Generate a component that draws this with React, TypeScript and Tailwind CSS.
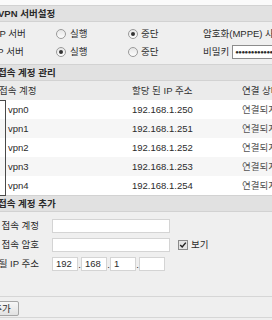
import React from 'react';

const accounts = [
  { name: 'vpn0', ip: '192.168.1.250' },
  { name: 'vpn1', ip: '192.168.1.251' },
  { name: 'vpn2', ip: '192.168.1.252' },
  { name: 'vpn3', ip: '192.168.1.253' },
  { name: 'vpn4', ip: '192.168.1.254' },
];

const Radio = ({ checked }: { checked?: boolean }) => (
  <span className="flex h-[10px] w-[10px] shrink-0 items-center justify-center rounded-full border border-[#9a9a9a] bg-gradient-to-b from-[#e6e6e6] to-[#fdfdfd]">
    {checked && <span className="h-[4px] w-[4px] rounded-full bg-[#333]" />}
  </span>
);

const SectionTitle = ({ children }: { children: React.ReactNode }) => (
  <div className="flex h-[17px] items-center border-y border-[#d2d2d2] bg-[#e1e1e1] pl-[18px] font-bold text-[#2a2a2a]">
    {children}
  </div>
);

const ServerRow = ({ label, run, extra }: { label: string; run: boolean; extra: React.ReactNode }) => (
  <div className="flex h-[18px] items-center whitespace-nowrap">
    <div className="w-[76px] pl-[1px]">{label}</div>
    <label className="flex w-[72px] items-center gap-[4px]">
      <Radio checked={run} />
      <span>실행</span>
    </label>
    <label className="flex w-[75px] items-center gap-[3px]">
      <Radio checked={!run} />
      <span>중단</span>
    </label>
    {extra}
  </div>
);

const Field = ({ className = '', children }: { className?: string; children?: React.ReactNode }) => (
  <div className={`flex h-[14px] shrink-0 items-center border border-[#d4d4d4] bg-white pl-[3px] ${className}`}>{children}</div>
);

// labels are right aligned; long ones run off to the left
const FormLabel = ({ children }: { children: React.ReactNode }) => (
  <div className="flex w-[72px] shrink-0 justify-end whitespace-nowrap pr-[13px]">{children}</div>
);

export default function App() {
  return (
    <div className="h-[320px] w-[272px] overflow-hidden bg-[#efefef] text-[9.5px] leading-none text-[#2b2b2b] [font-family:'Liberation_Sans','Noto_Sans_CJK_KR',sans-serif]">
      <div className="ml-[-20px] w-[330px]">
        <div className="h-[5px] bg-[#fafafa]" />

        <SectionTitle>VPN 서버설정</SectionTitle>
        <div className="pt-[3px] pb-[3px]">
          <ServerRow label="PPTP 서버" run={false} extra={<span>암호화(MPPE) 사용</span>} />
          <ServerRow
            label="L2TP 서버"
            run={true}
            extra={
              <div className="flex items-center gap-[3px]">
                <span>비밀키</span>
                <div className="flex h-[14px] w-[60px] items-center overflow-hidden border border-[#8c8c8c] bg-white pl-[2px] text-[6px] tracking-[-0.5px]">
                  ●●●●●●●●●●●●●●
                </div>
              </div>
            }
          />
        </div>

        <SectionTitle>접속 계정 관리</SectionTitle>
        <div className="flex h-[19px] items-center whitespace-nowrap bg-[#ebebeb] text-[#333]">
          <div className="w-[152px] pl-[19px]">접속 계정</div>
          <div className="w-[110px]">할당 된 IP 주소</div>
          <div>연결 상태</div>
        </div>
        <div className="relative">
          {accounts.map((a, i) => (
            <div key={a.name} className={`flex h-[19px] items-center whitespace-nowrap ${i % 2 ? 'bg-[#f6f6f6]' : 'bg-white'}`}>
              <div className="w-[152px] pl-[28px]">{a.name}</div>
              <div className="w-[110px]">{a.ip}</div>
              <div className="text-[#555]">연결되지 않음</div>
            </div>
          ))}
          <div className="absolute top-[0px] left-[15px] h-[96px] w-[11px] border border-[#4a4a4a]" />
        </div>

        <SectionTitle>접속 계정 추가</SectionTitle>
        <div className="pt-[4px]">
          <div className="flex h-[19px] items-center">
            <FormLabel>접속 계정</FormLabel>
            <Field className="w-[118px]" />
          </div>
          <div className="flex h-[19px] items-center">
            <FormLabel>접속 암호</FormLabel>
            <Field className="w-[118px]" />
            <span className="ml-[8px] flex h-[10px] w-[10px] items-center justify-center border border-[#8a8a8a] bg-[#e4e4e4]">
              <svg viewBox="0 0 10 10" className="h-[8px] w-[8px]">
                <path d="M1.5 5 L4 7.5 L8.5 2" fill="none" stroke="#222" strokeWidth="1.8" />
              </svg>
            </span>
            <span className="ml-[3px]">보기</span>
          </div>
          <div className="flex h-[19px] items-center">
            <FormLabel>할당 될 IP 주소</FormLabel>
            <Field className="w-[26px]">192</Field>
            <span className="w-[3px] self-end pb-[4px] text-center">.</span>
            <Field className="w-[26px]">168</Field>
            <span className="w-[3px] self-end pb-[4px] text-center">.</span>
            <Field className="w-[26px]">1</Field>
            <span className="w-[3px] self-end pb-[4px] text-center">.</span>
            <Field className="w-[26px]" />
          </div>
        </div>

        <div className="mt-[23px] border-t border-[#d6d6d6] pt-[4px] pb-[1px]">
          <button className="ml-[5px] h-[15px] w-[34px] rounded-[2px] border border-[#a6a6a6] bg-gradient-to-b from-[#f7f7f7] to-[#e2e2e2] text-[9.5px] leading-none">
            추가
          </button>
        </div>
        <div className="border-t border-[#d6d6d6]" />
      </div>
    </div>
  );
}
